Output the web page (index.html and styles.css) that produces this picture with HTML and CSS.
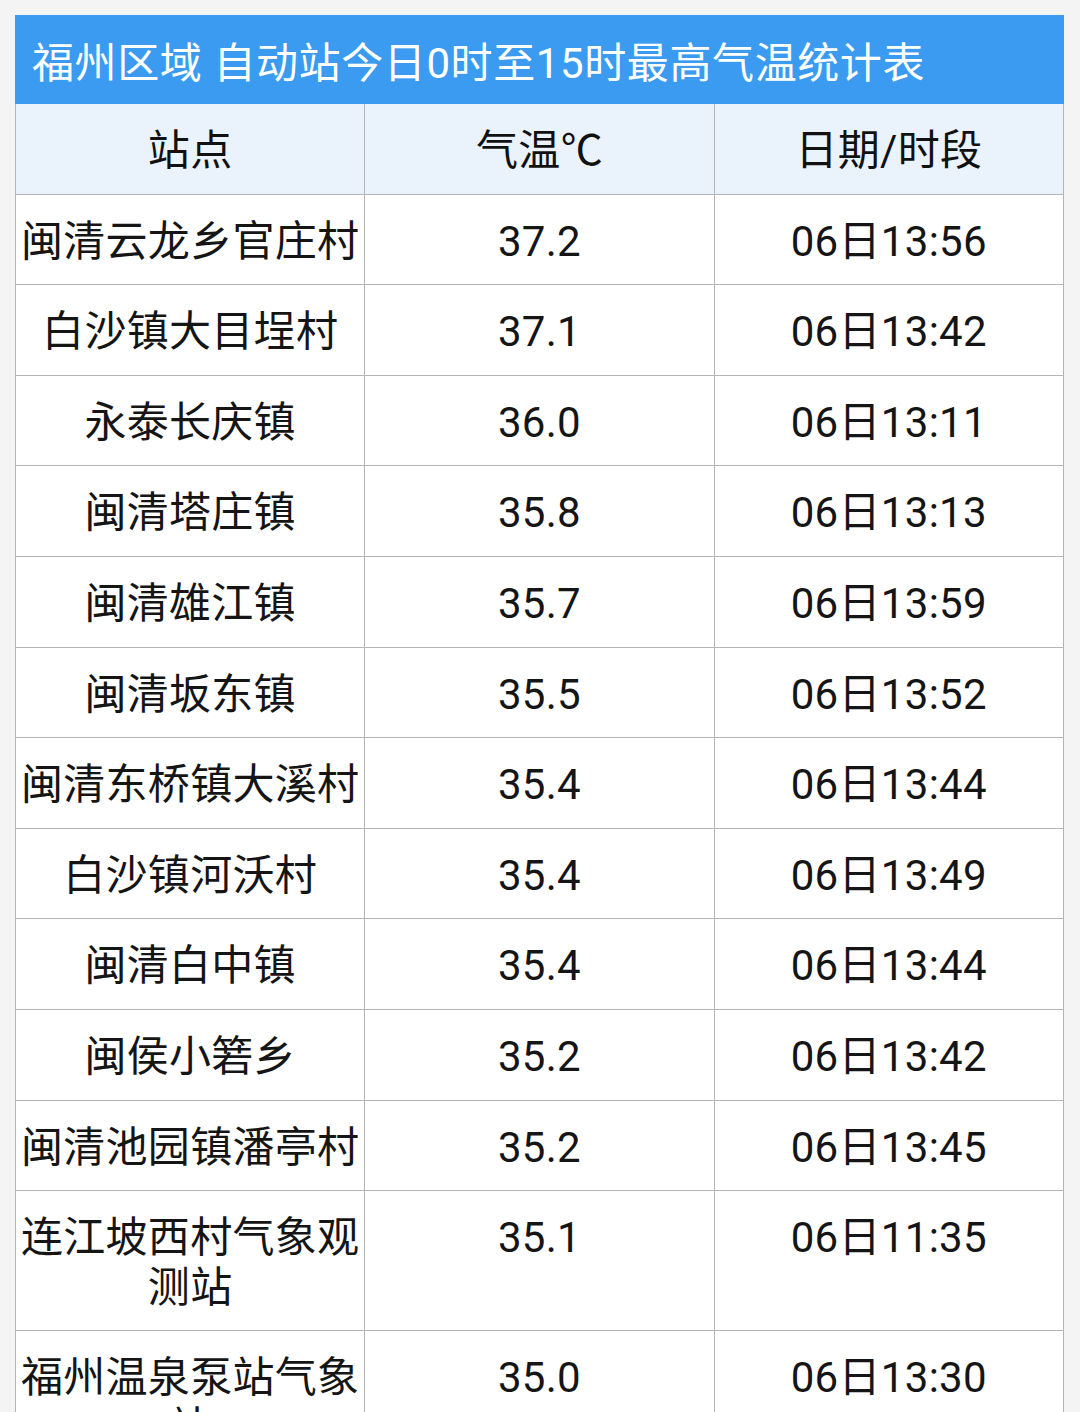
FILE: index.html
```html
<!DOCTYPE html>
<html lang="zh-CN">
<head>
<meta charset="utf-8">
<link rel="stylesheet" href="styles.css">
</head>
<body>
<div class="sheet">
  <div class="title">福州区域 自动站今日0时至15时最高气温统计表</div>
  <table class="grid">
    <thead>
      <tr><th>站点</th><th>气温℃</th><th>日期/时段</th></tr>
    </thead>
    <tbody>
      <tr><td>闽清云龙乡官庄村</td><td>37.2</td><td>06日13:56</td></tr>
      <tr><td>白沙镇大目埕村</td><td>37.1</td><td>06日13:42</td></tr>
      <tr><td>永泰长庆镇</td><td>36.0</td><td>06日13:11</td></tr>
      <tr><td>闽清塔庄镇</td><td>35.8</td><td>06日13:13</td></tr>
      <tr><td>闽清雄江镇</td><td>35.7</td><td>06日13:59</td></tr>
      <tr><td>闽清坂东镇</td><td>35.5</td><td>06日13:52</td></tr>
      <tr><td>闽清东桥镇大溪村</td><td>35.4</td><td>06日13:44</td></tr>
      <tr><td>白沙镇河沃村</td><td>35.4</td><td>06日13:49</td></tr>
      <tr><td>闽清白中镇</td><td>35.4</td><td>06日13:44</td></tr>
      <tr><td>闽侯小箬乡</td><td>35.2</td><td>06日13:42</td></tr>
      <tr><td>闽清池园镇潘亭村</td><td>35.2</td><td>06日13:45</td></tr>
      <tr><td>连江坡西村气象观测站</td><td>35.1</td><td>06日11:35</td></tr>
      <tr><td>福州温泉泵站气象站</td><td>35.0</td><td>06日13:30</td></tr>
    </tbody>
  </table>
</div>
</body>
</html>
```

FILE: styles.css
```css
html, body {
  margin: 0;
  padding: 0;
}
body {
  background: #f4f4f4;
  font-family: Roboto, "Noto Sans CJK SC", sans-serif;
  color: #151515;
  height: 1412px;
  overflow: hidden;
}
.sheet {
  margin: 15px 16px 0 15px;
  width: 1049px;
  background: #ffffff;
}
.title {
  background: #3a9bf1;
  color: #ffffff;
  font-size: 42px;
  letter-spacing: 0.6px;
  line-height: 50px;
  height: 89px;
  box-sizing: border-box;
  padding: 24px 0 0 17px;
  white-space: nowrap;
  font-weight: 400;
}
.grid {
  width: 100%;
  border-collapse: collapse;
  table-layout: fixed;
}
.grid th,
.grid td {
  border: 1px solid #b4b4b4;
  font-size: 42px;
  letter-spacing: 0.3px;
  line-height: 49.6px;
  padding: 22px 4px 18px;
  text-align: center;
  vertical-align: top;
  font-weight: 400;
}
.grid thead tr th {
  border-top: none;
}
.grid th {
  background: #eaf2fc;
  color: #111111;
}
.grid td {
  background: #ffffff;
}
```
